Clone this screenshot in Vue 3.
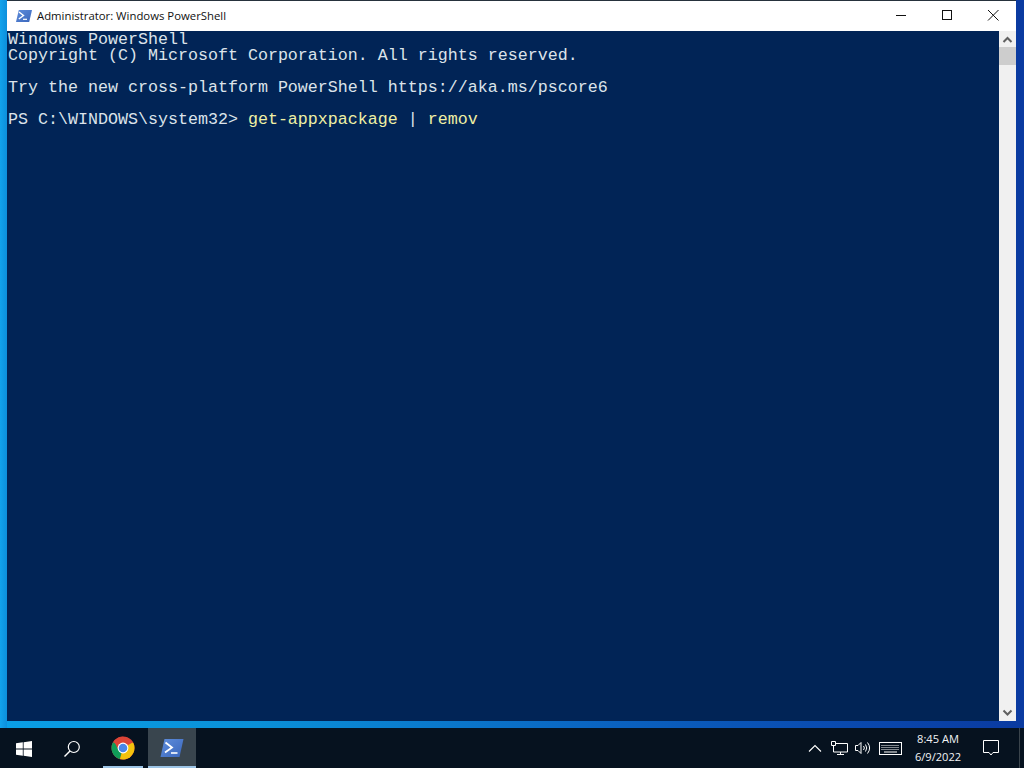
<script setup>
const lines = [
  { id: 1, text: 'Windows PowerShell' },
  { id: 2, text: 'Copyright (C) Microsoft Corporation. All rights reserved.' },
  { id: 3, text: '\u00a0' },
  { id: 4, text: 'Try the new cross-platform PowerShell https://aka.ms/pscore6' },
  { id: 5, text: '\u00a0' },
]
</script>

<template>
  <div class="screen">
    <div class="desktop">
      <div class="window">
        <header class="titlebar">
          <svg class="ps-icon" width="16" height="12" viewBox="0 0 16 12">
            <defs>
              <linearGradient id="psSmall" x1="0" y1="0" x2="1" y2="1">
                <stop offset="0" stop-color="#5f8edc" />
                <stop offset="1" stop-color="#3a66bb" />
              </linearGradient>
            </defs>
            <path d="M2.800 0H16L13.200 12H0z" fill="url(#psSmall)" />
            <path d="M3 2l4.500 3.500L2.800 9" fill="none" stroke="#fff" stroke-width="1.400" />
            <path d="M7 9.300h4" stroke="#fff" stroke-width="1.200" />
          </svg>
          <span class="title">Administrator: Windows PowerShell</span>
          <div class="controls">
            <svg class="ctl" width="46" height="30" viewBox="0 0 46 30">
              <path d="M18 14.500h10" stroke="#111" fill="none" />
            </svg>
            <svg class="ctl" width="46" height="30" viewBox="0 0 46 30">
              <rect x="18.500" y="9.500" width="9" height="9" stroke="#111" fill="none" />
            </svg>
            <svg class="ctl" width="46" height="30" viewBox="0 0 46 30">
              <path d="M18 9l10.500 10.500M28.500 9L18 19.500" stroke="#111" fill="none" />
            </svg>
          </div>
        </header>
        <div class="body">
          <main class="console">
            <div v-for="line in lines" :key="line.id" class="line">{{ line.text }}</div>
            <div class="line">PS C:\WINDOWS\system32&gt; <span class="cmd">get-appxpackage</span> | <span class="cmd">remov</span></div>
          </main>
          <aside class="scrollbar">
            <svg class="arrow" width="17" height="16" viewBox="0 0 17 16">
              <path d="M4.500 11l4-4 4 4" fill="none" stroke="#606060" stroke-width="2" />
            </svg>
            <div class="thumb"></div>
            <div class="track"></div>
            <svg class="arrow" width="17" height="17" viewBox="0 0 17 17">
              <path d="M4.500 6.500l4 4 4-4" fill="none" stroke="#606060" stroke-width="2" />
            </svg>
          </aside>
        </div>
      </div>
    </div>
    <footer class="taskbar">
      <div class="tb-left">
        <div class="tb-btn start">
          <svg width="16" height="16" viewBox="0 0 16 16">
            <path d="M0 2.300l6.800-1v6.300H0zM7.600 1.200L16 0v7.600H7.600zM0 8.400h6.800v6.300l-6.800-1zM7.600 8.400H16V16l-8.400-1.200z" fill="#fff" />
          </svg>
        </div>
        <div class="tb-btn search">
          <svg width="18" height="18" viewBox="0 0 18 18">
            <circle cx="10.800" cy="7" r="5.500" fill="none" stroke="#fff" stroke-width="1.200" />
            <path d="M7 11L1.500 16.500" stroke="#fff" stroke-width="1.400" />
          </svg>
        </div>
        <div class="tb-btn app running">
          <svg width="24" height="24" viewBox="0 0 24 24">
            <circle cx="12" cy="12" r="11.500" fill="#db4437" />
            <path d="M12 12L2.040 6.250A11.500 11.500 0 0 0 9 23.100z" fill="#0f9d58" />
            <path d="M12 12L9 23.100A11.500 11.500 0 0 0 23.500 12 11.500 11.500 0 0 0 21.960 6.250z" fill="#f4c20d" />
            <path d="M12 7h9.960A11.500 11.500 0 0 0 2.900 5L7.700 14.500A5 5 0 0 1 12 7z" fill="#db4437" />
            <circle cx="12" cy="12" r="5.400" fill="#fff" />
            <circle cx="12" cy="12" r="4.300" fill="#4a86e8" />
          </svg>
        </div>
        <div class="tb-btn app active">
          <svg width="24" height="20" viewBox="0 0 24 20">
            <defs>
              <linearGradient id="psLarge" x1="0" y1="0" x2="1" y2="1">
                <stop offset="0" stop-color="#5f8edc" />
                <stop offset="1" stop-color="#3a66bb" />
              </linearGradient>
            </defs>
            <path d="M4.500 1H23.500L19.500 19H.5z" fill="url(#psLarge)" />
            <path d="M5.500 4.500L12 9.500 5 14.500" fill="none" stroke="#fff" stroke-width="1.800" />
            <path d="M11 15h6.500" stroke="#fff" stroke-width="1.600" />
          </svg>
        </div>
      </div>
      <div class="tray">
        <svg class="chev" width="14" height="8" viewBox="0 0 14 8">
          <path d="M1 7.500l6-6 6 6" fill="none" stroke="#fff" stroke-width="1.100" />
        </svg>
        <svg class="net" width="17" height="14" viewBox="0 0 17 14">
          <path d="M5 2.500h11.500v8.500H2.500V5M9.500 11v2.500M6 13.500h7M.5.500h4v4h-4z" fill="none" stroke="#fff" />
        </svg>
        <svg class="vol" width="16" height="14" viewBox="0 0 16 14">
          <path d="M.5 4.500h2.500L6 1.500v11L3 9.500H.5z" fill="none" stroke="#fff" />
          <path d="M8.500 5a3 3 0 0 1 0 4M10.500 3.500a6 6 0 0 1 0 7M12.500 1.500a9 9 0 0 1 0 11" fill="none" stroke="#fff" />
        </svg>
        <svg class="kbd" width="23" height="13" viewBox="0 0 23 13">
          <rect x=".5" y=".5" width="22" height="12" fill="none" stroke="#fff" />
          <path d="M2.500 3.500h18M2.500 5.500h18M2.500 7.500h18" stroke="#fff" stroke-dasharray="1 1" />
          <path d="M5 10h13" stroke="#fff" />
        </svg>
        <div class="clock">
          <span>8:45 AM</span>
          <span>6/9/2022</span>
        </div>
        <svg class="notif" width="16" height="16" viewBox="0 0 16 16">
          <path d="M.5.500h15v12H10l-2 2.500-2-2.500H.5z" fill="none" stroke="#fff" />
        </svg>
        <div class="show-desktop"></div>
      </div>
    </footer>
  </div>
</template>

<style scoped>
.screen {
  width: 1024px;
  height: 768px;
  display: flex;
  flex-direction: column;
  overflow: hidden;
  background: #000;
}
.desktop {
  height: 728px;
  box-sizing: border-box;
  padding: 0 8px 7px 7px;
  background:
    linear-gradient(to right, #12a3ec 0, #0c8fdc 7px, transparent 7px),
    linear-gradient(to right, #0a9fe6, #0a90d8 25%, #0a62c0 60%, #0a4cb0 80%, #0a3aa0);
}
.window {
  height: 721px;
  box-sizing: border-box;
  border-top: 1px solid #26323c;
  display: flex;
  flex-direction: column;
}
.titlebar {
  height: 30px;
  flex: none;
  background: #fff;
  display: flex;
  align-items: center;
  padding-left: 9px;
}
.ps-icon {
  flex: none;
}
.title {
  margin-left: 5px;
  font: 11.350px/16px "Open Sans", "Noto Sans", sans-serif;
  color: #111;
  white-space: nowrap;
}
.controls {
  margin-left: auto;
  display: flex;
}
.ctl {
  display: block;
}
.body {
  flex: 1;
  display: flex;
  min-height: 0;
}
.console {
  flex: 1;
  background: #012456;
  padding: 1px 0 0 1px;
  font: 16.670px/16px "Liberation Mono", "DejaVu Sans Mono", monospace;
  color: #dce3ea;
  white-space: pre;
}
.line {
  height: 16px;
  line-height: 16px;
}
.cmd {
  color: #f0f0a4;
}
.scrollbar {
  width: 17px;
  flex: none;
  background: #f0f0f0;
  display: flex;
  flex-direction: column;
}
.arrow {
  display: block;
  flex: none;
}
.thumb {
  height: 18px;
  background: #cdcdcd;
  flex: none;
}
.track {
  flex: 1;
}
.taskbar {
  height: 40px;
  flex: none;
  background: #06121f;
  display: flex;
  justify-content: space-between;
}
.tb-left {
  display: flex;
}
.tb-btn {
  width: 48px;
  height: 40px;
  display: flex;
  align-items: center;
  justify-content: center;
  box-sizing: border-box;
}
.start {
  padding-top: 1px;
}
.search {
  padding-top: 1px;
}
.app {
  position: relative;
  margin-left: 3px;
}
.app + .app {
  margin-left: 1px;
}
.running::after,
.active::after {
  content: "";
  position: absolute;
  bottom: 0;
  height: 2px;
  background: #9cc4e6;
}
.running::after {
  left: 4px;
  right: 4px;
}
.active::after {
  left: 0;
  right: 0;
}
.active {
  background: #39454e;
}
.tray {
  display: flex;
  align-items: center;
}
.chev {
  margin-right: 9px;
}
.net {
  margin-right: 7px;
}
.vol {
  margin-right: 8px;
}
.kbd {
  margin-right: 5px;
}
.clock {
  width: 62px;
  display: flex;
  flex-direction: column;
  align-items: center;
  gap: 2px;
  font: 11.100px/16px "Open Sans", "Noto Sans", sans-serif;
  color: #f2f4f6;
}
.notif {
  margin-left: 14px;
  margin-right: 20px;
}
.show-desktop {
  width: 1px;
  height: 40px;
  background: #3a444c;
  margin-right: 4px;
}
</style>
